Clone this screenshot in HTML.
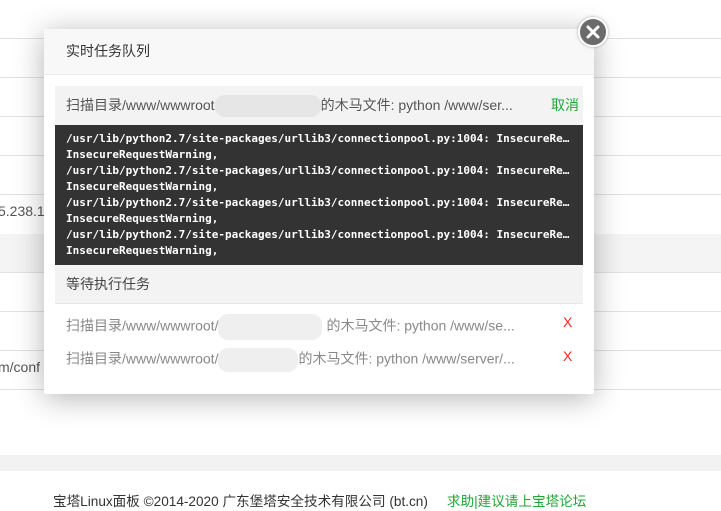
<!DOCTYPE html>
<html><head><meta charset="utf-8"><style>
body{margin:0;width:721px;height:511px;overflow:hidden;background:#fff;font-family:"Liberation Sans","Noto Sans CJK SC",sans-serif;position:relative}
.ln{position:absolute;left:0;width:721px;height:1px;background:#e2e2e2}
.dlg{position:absolute;left:44px;top:29px;width:550px;height:365px;background:#fff;border-radius:2px;box-shadow:0 4px 30px rgba(0,0,0,.3)}
.hd{height:45px;background:#f8f8f8;border-bottom:1px solid #eee;font-size:14px;color:#333;line-height:45px;padding-left:22px}
.run{position:absolute;left:11px;top:57px;width:528px;height:39px;background:#f3f3f3;font-size:14px;color:#555;line-height:39px;white-space:nowrap}
.log{position:absolute;left:11px;top:96px;width:528px;height:140px;background:#333;color:#fff;font-family:"DejaVu Sans Mono","Liberation Mono",monospace;font-weight:bold;font-size:11px;line-height:16px;padding-top:6px;box-sizing:border-box;overflow:hidden}
.log div{padding-left:11px;white-space:nowrap}
.wait{position:absolute;left:11px;top:236px;width:528px;height:38px;background:#f3f3f3;border-bottom:1px solid #e6e6e6;font-size:14px;color:#444;line-height:38px}
.it{position:absolute;left:22px;font-size:14px;color:#888;white-space:nowrap}
.x{position:absolute;left:519px;color:#f22;font-size:14px}
</style></head><body>
<div class="ln" style="top:38px"></div><div class="ln" style="top:77px"></div><div class="ln" style="top:116px"></div><div class="ln" style="top:155px"></div><div class="ln" style="top:194px"></div>
<div style="position:absolute;left:0;top:234px;width:721px;height:38px;background:#f4f4f4"></div>
<div class="ln" style="top:272px"></div><div class="ln" style="top:311px"></div><div class="ln" style="top:350px"></div><div class="ln" style="top:389px"></div>
<div style="position:absolute;left:-2px;top:203px;font-size:14px;color:#555">5.238.11</div>
<div style="position:absolute;left:-2px;top:359px;font-size:14px;color:#555">m/conf</div>
<div style="position:absolute;left:0;top:455px;width:721px;height:16px;background:#f2f2f2"></div>
<div style="position:absolute;left:53px;top:490px;font-size:13.6px;color:#333;white-space:nowrap">宝塔Linux面板 ©2014-2020 广东堡塔安全技术有限公司 (bt.cn)<span style="color:#20a53a;margin-left:19px">求助|建议请上宝塔论坛</span></div>
<div class="dlg">
<div class="hd">实时任务队列</div>
<div class="run"><span style="margin-left:11px">扫描目录/www/wwwroot</span><span style="display:inline-block;width:106px;height:22px;vertical-align:middle;background:#e6e6e6;border-radius:10px"></span><span>的木马文件: python /www/ser...</span><span style="position:absolute;left:496px;color:#20a53a">取消</span></div>
<div class="log">
<div>/usr/lib/python2.7/site-packages/urllib3/connectionpool.py:1004: InsecureRe…</div><div>InsecureRequestWarning,</div>
<div>/usr/lib/python2.7/site-packages/urllib3/connectionpool.py:1004: InsecureRe…</div><div>InsecureRequestWarning,</div>
<div>/usr/lib/python2.7/site-packages/urllib3/connectionpool.py:1004: InsecureRe…</div><div>InsecureRequestWarning,</div>
<div>/usr/lib/python2.7/site-packages/urllib3/connectionpool.py:1004: InsecureRe…</div><div>InsecureRequestWarning,</div>
</div>
<div class="wait"><span style="margin-left:11px">等待执行任务</span></div>
<div class="it" style="top:285px">扫描目录/www/wwwroot/<span style="display:inline-block;width:104px;height:26px;vertical-align:middle;background:#efefef;border-radius:10px;margin-right:4px"></span>的木马文件: python /www/se...</div>
<div class="x" style="top:285px">X</div>
<div class="it" style="top:319px">扫描目录/www/wwwroot/<span style="display:inline-block;width:80px;height:24px;vertical-align:middle;background:#efefef;border-radius:10px"></span>的木马文件: python /www/server/...</div>
<div class="x" style="top:319px">X</div>
</div>
<div style="position:absolute;left:578px;top:17px;width:26px;height:26px;border-radius:50%;background:#6b6b6b;border:2px solid #fff;box-shadow:0 0 3px rgba(0,0,0,.3)">
<svg width="26" height="26" viewBox="0 0 26 26"><path d="M8 8L18 18M18 8L8 18" stroke="#fff" stroke-width="3" stroke-linecap="round"/></svg></div>
</body></html>
